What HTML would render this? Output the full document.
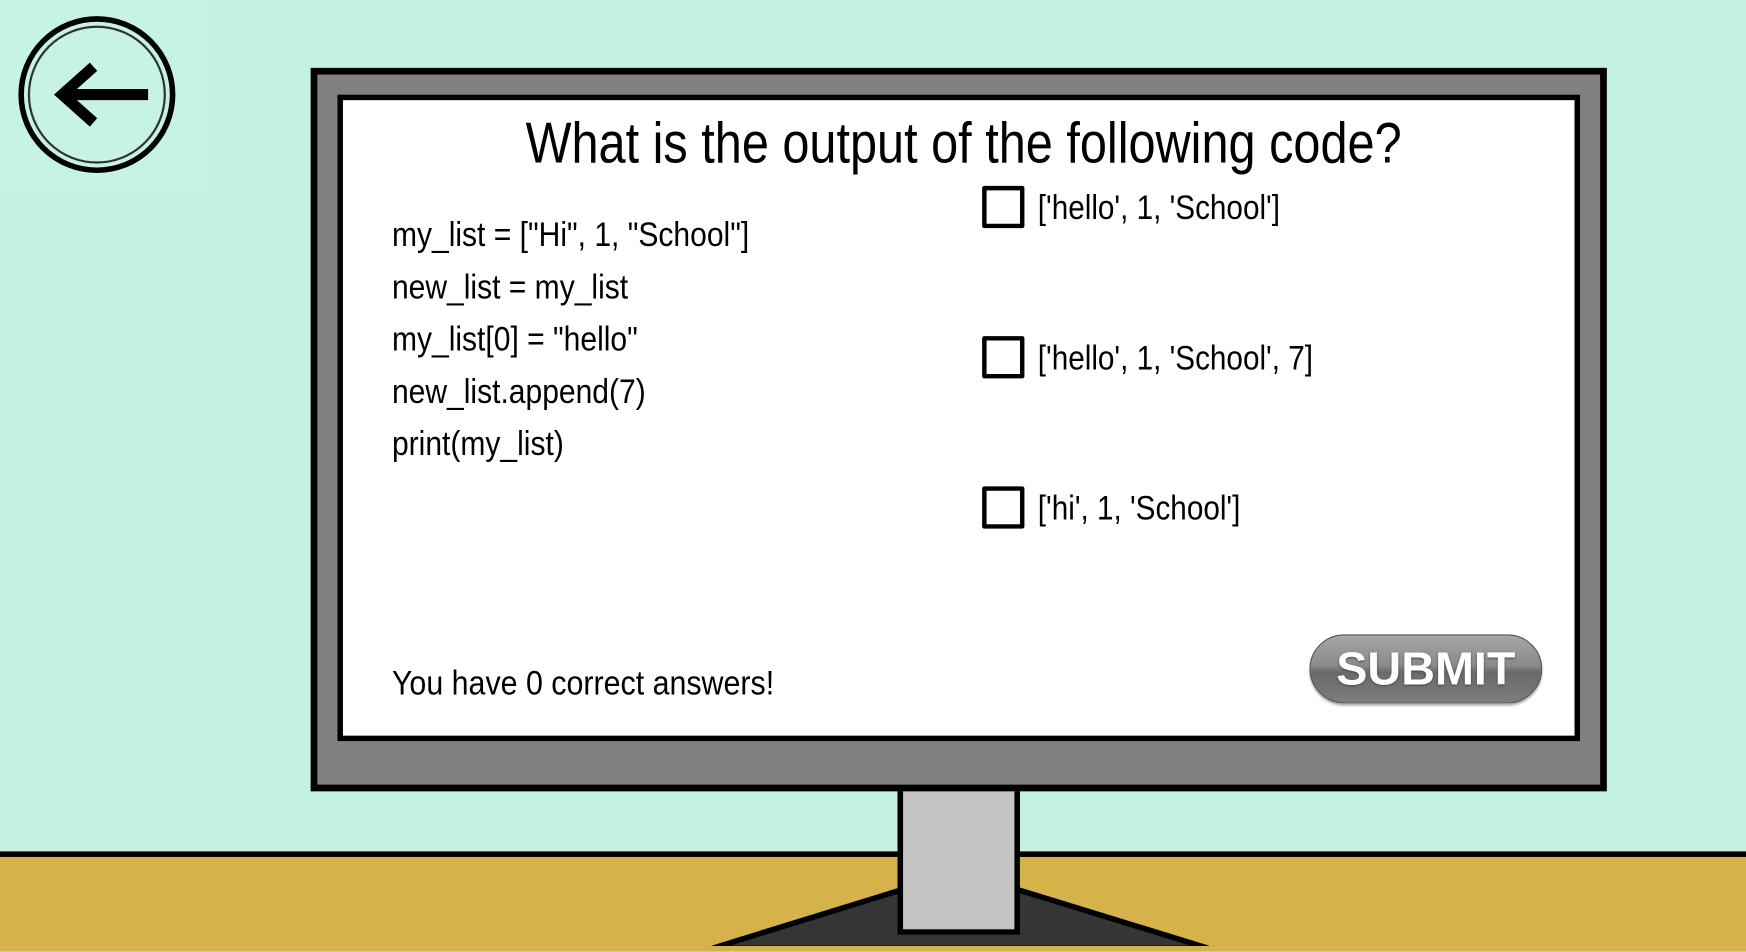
<!DOCTYPE html>
<html><head><meta charset="utf-8"><style>
html,body{margin:0;padding:0;width:1746px;height:946px;overflow:hidden;background:#c4f2e2}
#s{position:absolute;left:0;top:0;width:1568px;height:850px;transform:scale(1.11352,1.11294);transform-origin:0 0;font-family:"Liberation Sans",sans-serif;color:#000}
.a{position:absolute}
.t{position:absolute;white-space:nowrap;transform-origin:0 0;transform:scaleX(0.86)}
.cb{position:absolute;width:30px;height:30px;border:4px solid #000;border-radius:2px;background:#fff}
</style></head><body><div id="s">
<div class="a" style="left:0;top:0;width:183px;height:170px;background:#c6f3e4"></div>
<svg class="a" style="left:0;top:0" width="183" height="170">
<circle cx="87" cy="85" r="68" fill="none" stroke="#000" stroke-width="5"/>
<circle cx="87" cy="85" r="61" fill="none" stroke="#333" stroke-width="2"/>
<path d="M133 85 H54 M84 60 L56 85 L84 110" fill="none" stroke="#000" stroke-width="10" stroke-linejoin="miter"/>
</svg>
<div class="a" style="left:0;top:765px;width:1568px;height:85px;background:#d6b24a;border-top:5px solid #000"></div>
<svg class="a" style="left:0;top:0" width="1568" height="850">
<polygon points="640,852 808,800 916,800 1085,852" fill="#353535" stroke="#000" stroke-width="5"/>
</svg>
<div class="a" style="left:806px;top:700px;width:100px;height:130px;background:#c4c4c4;border:5px solid #000"></div>
<div class="a" style="left:279px;top:61px;width:1152px;height:638px;background:#808080;border:6px solid #000"></div>
<div class="a" style="left:303px;top:85px;width:1106px;height:571px;background:#fff;border:5px solid #000"></div>
<div class="t" style="left:472px;top:99px;font-size:52px;transform:scaleX(0.84)">What is the output of the following code?</div>
<div class="t" style="left:352px;top:187px;font-size:31px;line-height:47px;transform:scaleX(0.87)">my_list = ["Hi", 1, "School"]<br>new_list = my_list<br>my_list[0] = "hello"<br>new_list.append(7)<br>print(my_list)</div>
<div class="cb" style="left:882px;top:167px"></div>
<div class="t" style="left:932px;top:169px;font-size:31px">['hello', 1, 'School']</div>
<div class="cb" style="left:882px;top:302px"></div>
<div class="t" style="left:932px;top:304px;font-size:31px">['hello', 1, 'School', 7]</div>
<div class="cb" style="left:882px;top:437px"></div>
<div class="t" style="left:932px;top:439px;font-size:31px">['hi', 1, 'School']</div>
<div class="t" style="left:352px;top:596px;font-size:31px;transform:scaleX(0.88)">You have 0 correct answers!</div>
<div class="a" style="left:1176px;top:570px;width:207px;height:60px;border-radius:31px;border:1px solid #555;background:linear-gradient(#a6a6a6 0%,#8a8a8a 45%,#6a6a6a 55%,#7d7d7d 100%);box-shadow:0 2px 2px #aaa"></div>
<div class="a" style="left:1176px;top:577px;width:209px;text-align:center;color:#fff;font-weight:bold;font-size:42px;text-shadow:0 1px 2px #444">SUBMIT</div>
</div></body></html>
